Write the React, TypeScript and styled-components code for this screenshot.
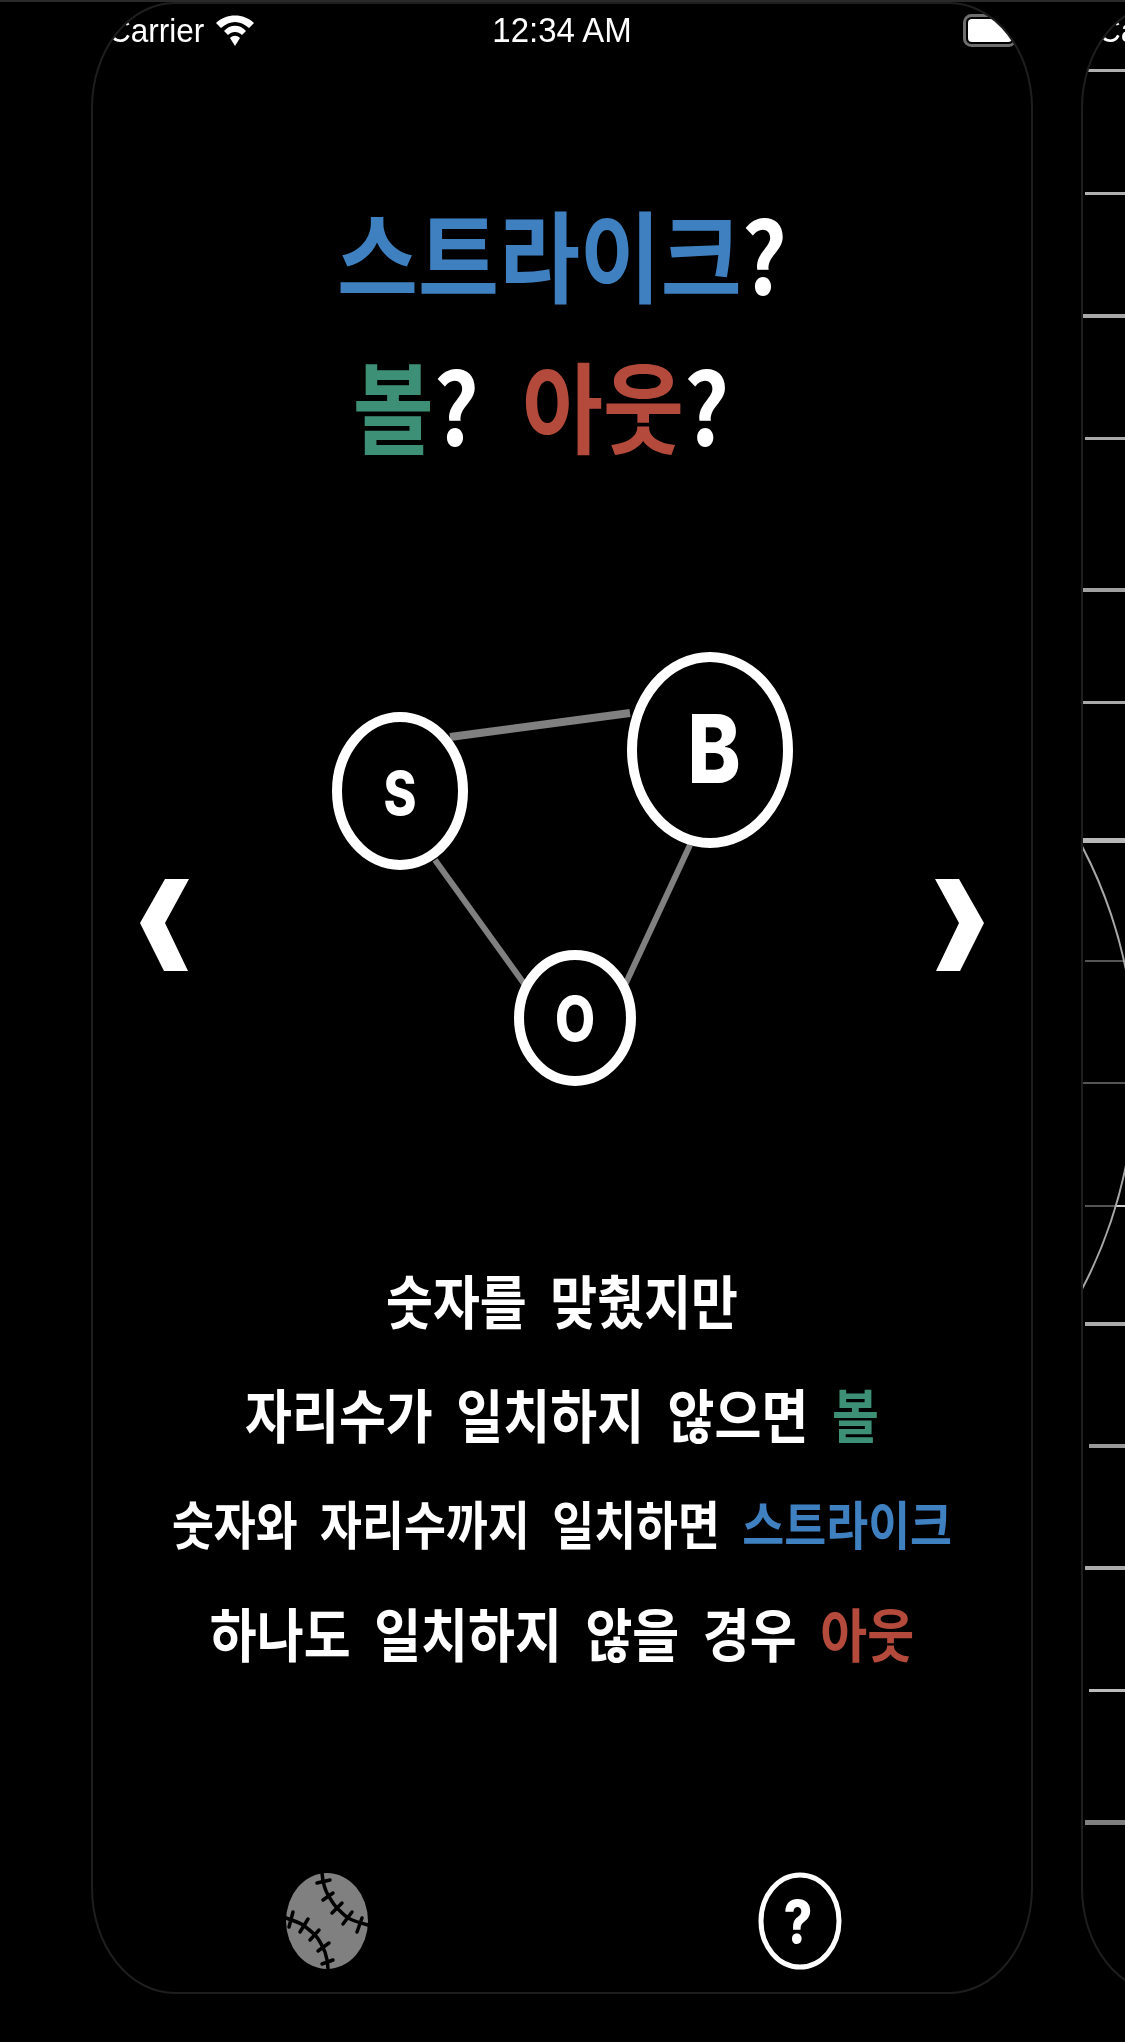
import React from "react";
import styled, { createGlobalStyle } from "styled-components";

const Global = createGlobalStyle`
  html, body { margin: 0; padding: 0; background: #000; }
  body { font-family: "Noto Sans CJK KR", "Noto Sans", sans-serif; }
`;

const Stage = styled.main`
  width: 1125px;
  height: 2042px;
  overflow: hidden;
  background: #000;
  border-top: 2px solid #2a2a2a;
  box-sizing: border-box;
  display: flex;
  gap: 48px;
  padding-left: 91px;
`;

const Phone = styled.section`
  position: relative;
  flex: 0 0 942px;
  height: 1992px;
  box-sizing: border-box;
  border: 2px solid #1e1e1e;
  border-radius: 84px / 106px;
  overflow: hidden;
  background: #000;
  color: #fff;
`;

const StatusBar = styled.header`
  height: 46px;
  padding: 3px 0 9px;
  display: grid;
  grid-template-columns: 1fr auto 1fr;
  align-items: center;
  font-family: "Liberation Sans", Arial, sans-serif;
`;

const StatusLeft = styled.div`
  display: flex;
  align-items: center;
  gap: 11px;
  padding-left: 15px;
`;

const StatusRight = styled.div`
  display: flex;
  justify-content: flex-end;
  padding-right: 14px;
`;

const StatusText = styled.span<{ $size: number }>`
  display: inline-block;
  font-size: ${(p) => p.$size}px;
  line-height: 34px;
  color: #fff;
  transform: scaleY(1.05);
`;

const Title = styled.h1`
  margin: 0;
  padding-top: 142px;
  font-weight: 700;
  text-align: center;
  font-size: 88px;
  display: flex;
  flex-direction: column;
  align-items: center;
  gap: 55px;
`;

const TitleLine = styled.div<{ $shift?: number }>`
  line-height: 96px;
  height: 96px;
  white-space: nowrap;
  transform: scaleY(1.13);
  margin-right: ${(p) => p.$shift ?? 0}px;
`;

const Tint = styled.span<{ $c: "blue" | "green" | "red" }>`
  color: ${(p) => (p.$c === "blue" ? "#3f80c0" : p.$c === "green" ? "#3d8f75" : "#b34a3c")};
`;

const Word = styled.span`
  margin-left: 43px;
`;

const DiagramRow = styled.div`
  margin-top: 194px;
  height: 560px;
  display: flex;
  align-items: center;
  justify-content: space-between;
  padding: 0 47px;
`;

const Chevron = styled.svg`
  width: 50px;
  height: 92px;
  flex: none;
`;

const Diagram = styled.svg`
  align-self: flex-start;
  flex: none;
  width: 500px;
  height: 460px;
  font-family: "Inter", "Noto Sans", sans-serif;
`;

const Lines = styled.div`
  margin-top: 37px;
  display: flex;
  flex-direction: column;
  align-items: center;
`;

const Line = styled.p<{ $size: number; $h: number }>`
  margin: 0;
  height: ${(p) => p.$h}px;
  line-height: ${(p) => p.$h}px;
  font-size: ${(p) => p.$size}px;
  font-weight: 700;
  word-spacing: 12px;
  white-space: nowrap;
  transform: scaleY(1.14);
`;

const Dock = styled.nav`
  margin-top: 182px;
  display: flex;
  justify-content: space-between;
  padding: 0 189px 0 192px;
`;

const DockIcon = styled.svg`
  width: 84px;
  height: 98px;
  flex: none;
`;

const Board = styled.div`
  display: flex;
  flex-direction: column;
`;

const Tick = styled.div<{ $gap: number; $inset: number; $h: number; $c: string }>`
  margin-top: ${(p) => p.$gap}px;
  margin-left: ${(p) => p.$inset}px;
  height: ${(p) => p.$h}px;
  background: ${(p) => p.$c};
  filter: blur(0.6px);
`;

const Arc = styled.svg`
  position: absolute;
  left: 0;
  top: 0;
  width: 100%;
  height: 100%;
`;

const Wifi = () => (
  <svg width="40" height="34" viewBox="0 0 40 34">
    <path d="M1 10 C11 0 29 0 39 10 L34 15 C25 7 15 7 6 15 Z" fill="#fff" />
    <path d="M9 18 C15 11 25 11 31 18 L27 22 C23 18 17 18 13 22 Z" fill="#fff" />
    <path d="M15 25 C18 22 22 22 25 25 L20 33 Z" fill="#fff" />
  </svg>
);

const Battery = () => (
  <svg width="54" height="33" viewBox="0 0 54 33">
    <rect x="1.5" y="1.5" width="51" height="30" rx="7" fill="none" stroke="#6e6e6e" strokeWidth="3" />
    <rect x="5" y="5" width="44" height="23" rx="4" fill="#fff" />
  </svg>
);

const Status = () => (
  <StatusBar>
    <StatusLeft>
      <StatusText $size={31.5}>Carrier</StatusText>
      <Wifi />
    </StatusLeft>
    <StatusText $size={33}>12:34 AM</StatusText>
    <StatusRight>
      <Battery />
    </StatusRight>
  </StatusBar>
);

const ticks: [number, number, number, string][] = [
  [7, 2, 3, "#b0b0b0"],
  [123, 2, 3, "#b0b0b0"],
  [122, 0, 4, "#a8a8a8"],
  [123, 2, 3, "#a8a8a8"],
  [151, 0, 4, "#a0a0a0"],
  [113, 0, 3, "#a8a8a8"],
  [137, 0, 5, "#b8b8b8"],
  [122, 2, 2, "#555"],
  [122, 0, 2, "#555"],
  [123, 2, 2, "linear-gradient(90deg, #555 0 30px, #ccc 30px)"],
  [117, 2, 4, "#aaa"],
  [122, 6, 4, "#999"],
  [122, 2, 4, "#aaa"],
  [123, 6, 3, "#bbb"],
  [131, 2, 5, "#808080"],
];

export default function App() {
  return (
    <>
      <Global />
      <Stage>
        <Phone>
          <Status />
          <Title>
            <TitleLine>
              <Tint $c="blue">스트라이크</Tint>?
            </TitleLine>
            <TitleLine $shift={42}>
              <Tint $c="green">볼</Tint>?<Word><Tint $c="red">아웃</Tint>?</Word>
            </TitleLine>
          </Title>
          <DiagramRow>
            <Chevron viewBox="0 0 50 92">
              <path d="M49 0 L25 0 L0 44 L24 92 L48 92 L25 44 Z" fill="#fff" />
            </Chevron>
            <Diagram viewBox="-3 0 500 460">
              <g fill="none" stroke="#808080">
                <line x1="135" y1="92" x2="315" y2="68" strokeWidth="8" />
                <line x1="120" y1="215" x2="210" y2="340" strokeWidth="6" />
                <line x1="375" y1="200" x2="310" y2="340" strokeWidth="6" />
              </g>
              <g fill="#000" stroke="#fff" strokeWidth="10">
                <ellipse cx="85" cy="146" rx="63" ry="74" />
                <ellipse cx="395" cy="105" rx="78" ry="93" />
                <ellipse cx="260" cy="373" rx="56" ry="63" />
              </g>
              <g fill="#fff" fontWeight="800" textAnchor="middle">
                <text x="85" y="170" fontSize="50" transform="translate(85 170) scale(1 1.2) translate(-85 -170)">S</text>
                <text x="399" y="138" fontSize="80" transform="translate(399 138) scale(1 1.19) translate(-399 -138)">B</text>
                <text x="260" y="396" fontSize="52" transform="translate(260 396) scale(1 1.2) translate(-260 -396)">O</text>
              </g>
            </Diagram>
            <Chevron viewBox="0 0 50 92">
              <path d="M1 0 L25 0 L50 44 L26 92 L2 92 L25 44 Z" fill="#fff" />
            </Chevron>
          </DiagramRow>
          <Lines>
            <Line $size={51} $h={115}>숫자를 맞췄지만</Line>
            <Line $size={51} $h={113}>자리수가 일치하지 않으면 <Tint $c="green">볼</Tint></Line>
            <Line $size={45.6} $h={105}>숫자와 자리수까지 일치하면 <Tint $c="blue">스트라이크</Tint></Line>
            <Line $size={51} $h={115}>하나도 일치하지 않을 경우 <Tint $c="red">아웃</Tint></Line>
          </Lines>
          <Dock>
            <DockIcon viewBox="0 0 84 98">
              <ellipse cx="42" cy="49" rx="41" ry="48" fill="#808080" />
              <g fill="none" stroke="#000" strokeWidth="3.5" strokeLinecap="round">
                <path d="M37 1 C38 12 40 18 43 23 C46 28 48 32 52 36 C56 40 59 43 63 46 C69 49 75 51 83 53" />
                <path d="M1 46 C7 48 13 50 18 53 C22 56 26 59 30 63 C35 68 37 74 40 80 C42 86 43 92 43 97" />
                <path d="M32 11 L45 8 M38 28 L48 21 M47 41 L57 31 M58 52 L67 40 M72 60 L77 46" />
                <path d="M8 40 L4 55 M23 47 L15 60 M34 58 L25 68 M44 71 L33 79 M48 88 L37 92" />
              </g>
            </DockIcon>
            <DockIcon viewBox="0 0 84 98">
              <ellipse cx="42" cy="49" rx="39" ry="46" fill="none" stroke="#fff" strokeWidth="5" />
              <text x="40" y="71" fontSize="50" fontWeight="800" fill="#fff" textAnchor="middle" fontFamily="Inter, sans-serif" transform="translate(40 71) scale(1 1.18) translate(-40 -71)">?</text>
            </DockIcon>
          </Dock>
        </Phone>
        <Phone>
          <Status />
          <Board>
            {ticks.map(([g, i, h, c], n) => (
              <Tick key={n} $gap={n === 0 ? g : g - ticks[n - 1][2]} $inset={i} $h={h} $c={c} />
            ))}
          </Board>
          <Arc viewBox="0 0 942 1988">
            <ellipse cx="-302" cy="1064" rx="355" ry="419" fill="none" stroke="#a8a8a8" strokeWidth="2" />
          </Arc>
        </Phone>
      </Stage>
    </>
  );
}
